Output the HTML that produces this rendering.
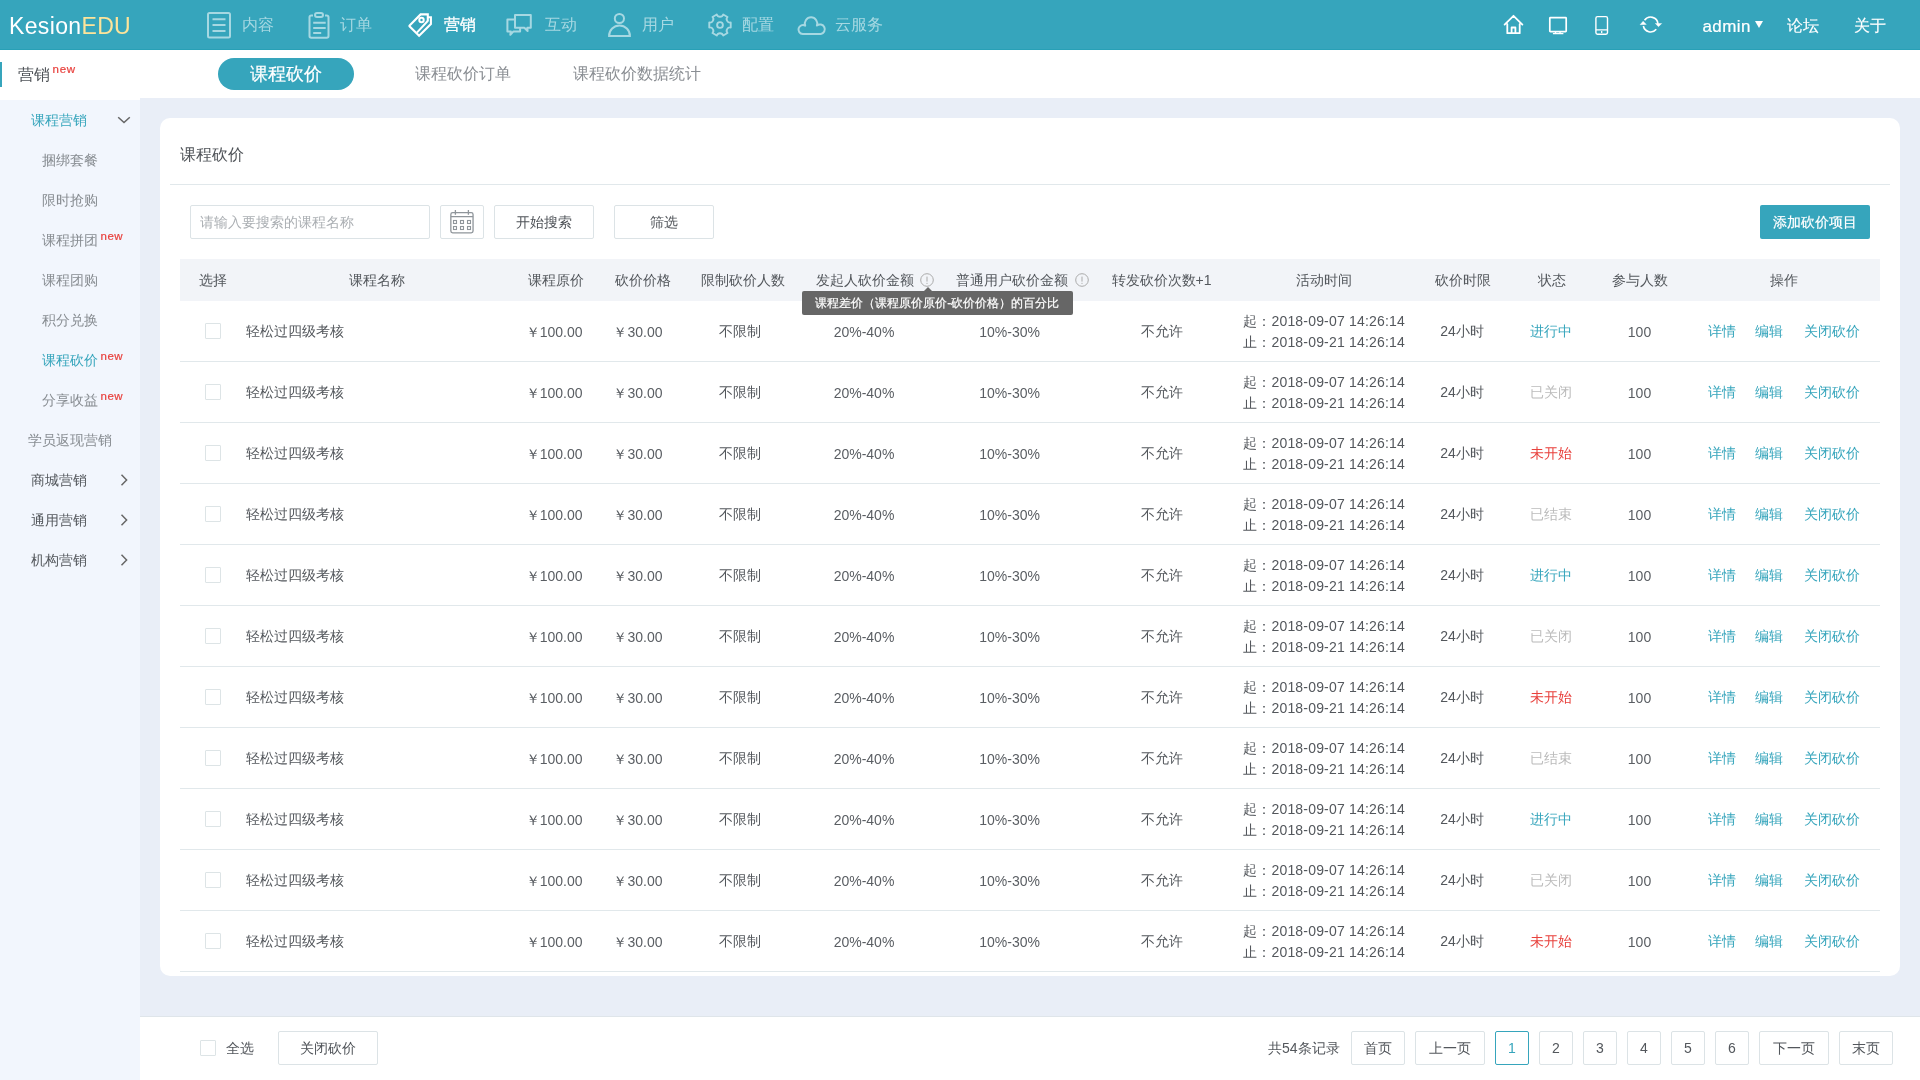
<!DOCTYPE html>
<html><head><meta charset="utf-8"><title>课程砍价</title>
<style>
html,body{margin:0;padding:0;width:1920px;height:1080px;overflow:hidden;background:#fff;font-family:"Liberation Sans", sans-serif}
.t{position:absolute;white-space:nowrap}
#root{position:absolute;left:0;top:0;width:1920px;height:1080px;will-change:transform}
.b{position:absolute}
svg.b{overflow:visible}
</style></head><body><div id="root">
<div class="b" style="left:0px;top:0px;width:1920px;height:49px;background:#36a5bc"></div>
<div class="b" style="left:0px;top:49px;width:1920px;height:1px;background:#28a0b6"></div>
<div class="t" style="left:9px;top:11px;font-size:23px;line-height:30px;letter-spacing:0.35px;color:#fff">Kesion<span style="color:#fde49a">EDU</span></div>
<svg class="b" style="left:206px;top:11px;" width="28" height="30" viewBox="0 0 28 30"><rect x="2" y="2" width="22" height="24.5" rx="1.5" fill="none" stroke="#a6d8e2" stroke-width="2"/><path d="M6.5 8.3h13M6.5 14h13M6.5 19.9h13" stroke="#a6d8e2" stroke-width="2"/></svg>
<div class="t" style="left:242px;top:14.0px;font-size:16px;line-height:22px;color:#a6d8e2;">内容</div>
<svg class="b" style="left:307px;top:11px;" width="26" height="30" viewBox="0 0 26 30"><path d="M6 4.5H4.2a1.7 1.7 0 0 0-1.7 1.7v18.9a1.7 1.7 0 0 0 1.7 1.7h15.6a1.7 1.7 0 0 0 1.7-1.7V6.2a1.7 1.7 0 0 0-1.7-1.7H18" fill="none" stroke="#a6d8e2" stroke-width="2"/><rect x="8" y="2" width="8" height="4" rx="2" fill="none" stroke="#a6d8e2" stroke-width="2"/><path d="M6.2 11.7h12.5M6.2 16.9h12.5M6.2 22.1h8" stroke="#a6d8e2" stroke-width="2"/></svg>
<div class="t" style="left:340px;top:14.0px;font-size:16px;line-height:22px;color:#a6d8e2;">订单</div>
<svg class="b" style="left:404px;top:9px;" width="32" height="32" viewBox="0 0 32 32"><path d="M23.7 12L12.9 23.6" stroke="#fff" stroke-width="2"/><path d="M24.3 8.2H26.9V15.1L15.1 26.7L5.5 17.3Q5.2 16.9 5.6 16.5L16.6 5.4H23.8V12.4" fill="none" stroke="#fff" stroke-width="2.1" stroke-linejoin="miter"/><circle cx="17.5" cy="11" r="2.2" fill="none" stroke="#fff" stroke-width="2"/></svg>
<div class="t" style="left:444px;top:14.0px;font-size:16px;line-height:22px;color:#fff;-webkit-text-stroke:0.3px #fff">营销</div>
<svg class="b" style="left:502px;top:9px;" width="34" height="32" viewBox="0 0 34 32"><path d="M5.4 10.4H18.1V22.4H11.5L8.3 25.8L8.8 22.4H5.4Z" fill="none" stroke="#a6d8e2" stroke-width="2" stroke-linejoin="round"/><path d="M13 6H28.8V18.7H25.3L25.6 22L22.3 18.7H13Z" fill="#36a5bc" stroke="#a6d8e2" stroke-width="2" stroke-linejoin="round"/></svg>
<div class="t" style="left:545px;top:14.0px;font-size:16px;line-height:22px;color:#a6d8e2;">互动</div>
<svg class="b" style="left:604px;top:9px;" width="32" height="32" viewBox="0 0 32 32"><circle cx="15.4" cy="9.5" r="4.6" fill="none" stroke="#a6d8e2" stroke-width="2"/><path d="M5.1 26.9A10.4 10.4 0 0 1 25.9 26.9Z" fill="none" stroke="#a6d8e2" stroke-width="2"/></svg>
<div class="t" style="left:642px;top:14.0px;font-size:16px;line-height:22px;color:#a6d8e2;">用户</div>
<svg class="b" style="left:704px;top:9px;" width="32" height="32" viewBox="0 0 32 32"><path d="M26.72 18.47L26.72 13.53A3.4 3.4 0 0 1 23.50 7.96L23.50 7.96L19.22 5.48A3.4 3.4 0 0 1 12.78 5.48L12.78 5.48L8.50 7.96A3.4 3.4 0 0 1 5.28 13.53L5.28 13.53L5.28 18.47A3.4 3.4 0 0 1 8.50 24.04L8.50 24.04L12.78 26.52A3.4 3.4 0 0 1 19.22 26.52L19.22 26.52L23.50 24.04A3.4 3.4 0 0 1 26.72 18.47Z" fill="none" stroke="#a6d8e2" stroke-width="1.9" stroke-linejoin="round"/><circle cx="16" cy="16" r="2.9" fill="none" stroke="#a6d8e2" stroke-width="1.9"/></svg>
<div class="t" style="left:742px;top:14.0px;font-size:16px;line-height:22px;color:#a6d8e2;">配置</div>
<svg class="b" style="left:795px;top:9px;" width="34" height="32" viewBox="0 0 34 32"><path d="M7.7 25A4.5 4.5 0 1 1 10.2 16.6A6.2 6.2 0 1 1 21.9 16.6A4.8 4.8 0 1 1 25.8 25Z" fill="none" stroke="#a6d8e2" stroke-width="2" stroke-linejoin="round"/></svg>
<div class="t" style="left:835px;top:14.0px;font-size:16px;line-height:22px;color:#a6d8e2;">云服务</div>
<svg class="b" style="left:1500px;top:10px;" width="28" height="30" viewBox="0 0 28 30"><path d="M4.6 14.6L13.5 5.8L22.4 14.6M7.3 14.2V23.2H19.7V14.2M11.6 23.2V17.5H15.4V23.2" fill="none" stroke="#fff" stroke-width="1.8" stroke-linejoin="round" stroke-linecap="round"/></svg>
<svg class="b" style="left:1544px;top:10px;" width="28" height="30" viewBox="0 0 28 30"><rect x="5.8" y="7.6" width="16.4" height="14" rx="0.6" fill="none" stroke="#fff" stroke-width="1.7"/><path d="M11.5 21.2v2.2M16 21.2v2.2M8.9 23.6h10.5" stroke="#fff" stroke-width="1.4"/></svg>
<svg class="b" style="left:1588px;top:10px;" width="26" height="30" viewBox="0 0 26 30"><rect x="7.9" y="6.6" width="11.6" height="17.6" rx="1.6" fill="none" stroke="#fff" stroke-width="1.4"/><path d="M7.9 19.9h11.6M13.7 21v2" stroke="#fff" stroke-width="1.3"/></svg>
<svg class="b" style="left:1636px;top:10px;" width="30" height="30" viewBox="0 0 30 30"><path d="M8.54 10.26A7.4 7.4 0 0 1 21.97 13.86M20.27 19.26A7.4 7.4 0 0 1 7.36 16.04" fill="none" stroke="#fff" stroke-width="1.6"/><path d="M19.3 13.5H25.7L22.5 16.7ZM4.1 14.7L10.3 14.4L7.1 11.2Z" fill="#fff" stroke="#fff" stroke-width="0.4" stroke-linejoin="round"/></svg>
<div class="t" style="left:1702.5px;top:15.5px;font-size:17px;line-height:22px;color:#fff;letter-spacing:0.4px;-webkit-text-stroke:0.2px #fff">admin</div>
<div class="b" style="left:1755px;top:21px;width:0;height:0;border-left:4.5px solid transparent;border-right:4.5px solid transparent;border-top:7px solid #fff"></div>
<div class="t" style="left:1786.5px;top:15.0px;font-size:16px;line-height:22px;color:#fff;-webkit-text-stroke:0.15px #fff">论坛</div>
<div class="t" style="left:1853.5px;top:15.0px;font-size:16px;line-height:22px;color:#fff;-webkit-text-stroke:0.15px #fff">关于</div>
<div class="b" style="left:0px;top:50px;width:1920px;height:48px;background:#fff"></div>
<div class="b" style="left:0px;top:62px;width:2px;height:25px;background:#36a5bc"></div>
<div class="t" style="left:17.5px;top:63.5px;font-size:16px;line-height:22px;color:#4f5358;">营销</div>
<div class="t" style="left:52.5px;top:62.2px;font-size:11.5px;line-height:14px;color:#e8413d;letter-spacing:0.75px;-webkit-text-stroke:0.2px #e8413d">new</div>
<div class="b" style="left:218px;top:58px;width:136px;height:32px;background:#36a5bc;border-radius:16px"></div>
<div class="t" style="left:218.0px;width:136px;text-align:center;top:61.5px;font-size:18px;line-height:24px;color:#fff;-webkit-text-stroke:0.2px #fff">课程砍价</div>
<div class="t" style="left:414.5px;top:62.5px;font-size:16px;line-height:22px;color:#8a8e93;">课程砍价订单</div>
<div class="t" style="left:572.5px;top:62.5px;font-size:16px;line-height:22px;color:#8a8e93;">课程砍价数据统计</div>
<div class="b" style="left:0px;top:100px;width:140px;height:980px;background:#f2f6fd"></div>
<div class="b" style="left:140px;top:98px;width:1780px;height:918px;background:#e9eef7"></div>
<div class="b" style="left:0px;top:98px;width:140px;height:2px;background:#fff"></div>
<div class="t" style="left:31px;top:110.0px;font-size:14px;line-height:20px;color:#36a5bc;">课程营销</div>
<svg class="b" style="left:116px;top:114px;" width="16" height="14" viewBox="0 0 16 14"><path d="M2.2 3.2L8 8.6L13.8 3.2" fill="none" stroke="#666" stroke-width="1.5"/></svg>
<div class="t" style="left:42px;top:149.5px;font-size:14px;line-height:20px;color:#878c91;">捆绑套餐</div>
<div class="t" style="left:42px;top:189.5px;font-size:14px;line-height:20px;color:#878c91;">限时抢购</div>
<div class="t" style="left:42px;top:229.5px;font-size:14px;line-height:20px;color:#878c91;">课程拼团</div>
<div class="t" style="left:100.5px;top:228.7px;font-size:11.5px;line-height:14px;color:#e8413d;letter-spacing:0.5px;-webkit-text-stroke:0.2px #e8413d">new</div>
<div class="t" style="left:42px;top:269.5px;font-size:14px;line-height:20px;color:#878c91;">课程团购</div>
<div class="t" style="left:42px;top:309.5px;font-size:14px;line-height:20px;color:#878c91;">积分兑换</div>
<div class="t" style="left:42px;top:349.5px;font-size:14px;line-height:20px;color:#36a5bc;">课程砍价</div>
<div class="t" style="left:100.5px;top:348.7px;font-size:11.5px;line-height:14px;color:#e8413d;letter-spacing:0.5px;-webkit-text-stroke:0.2px #e8413d">new</div>
<div class="t" style="left:42px;top:389.5px;font-size:14px;line-height:20px;color:#878c91;">分享收益</div>
<div class="t" style="left:100.5px;top:388.7px;font-size:11.5px;line-height:14px;color:#e8413d;letter-spacing:0.5px;-webkit-text-stroke:0.2px #e8413d">new</div>
<div class="t" style="left:28px;top:430.0px;font-size:14px;line-height:20px;color:#878c91;">学员返现营销</div>
<div class="t" style="left:31px;top:470.0px;font-size:14px;line-height:20px;color:#53575c;">商城营销</div>
<svg class="b" style="left:116px;top:472px;" width="14" height="16" viewBox="0 0 14 16"><path d="M5.5 2.8L10.6 8L5.5 13.2" fill="none" stroke="#666" stroke-width="1.5"/></svg>
<div class="t" style="left:31px;top:510.0px;font-size:14px;line-height:20px;color:#53575c;">通用营销</div>
<svg class="b" style="left:116px;top:512px;" width="14" height="16" viewBox="0 0 14 16"><path d="M5.5 2.8L10.6 8L5.5 13.2" fill="none" stroke="#666" stroke-width="1.5"/></svg>
<div class="t" style="left:31px;top:550.0px;font-size:14px;line-height:20px;color:#53575c;">机构营销</div>
<svg class="b" style="left:116px;top:552px;" width="14" height="16" viewBox="0 0 14 16"><path d="M5.5 2.8L10.6 8L5.5 13.2" fill="none" stroke="#666" stroke-width="1.5"/></svg>
<div class="b" style="left:160px;top:118px;width:1740px;height:858px;background:#fff;border-radius:10px"></div>
<div class="t" style="left:179.5px;top:143.5px;font-size:16px;line-height:22px;color:#4f5358;">课程砍价</div>
<div class="b" style="left:170px;top:184px;width:1720px;height:1px;background:#e1e8eb"></div>
<div class="b" style="left:190px;top:205px;width:240px;height:34px;border:1px solid #dce3e6;border-radius:2px;box-sizing:border-box;background:#fff"></div>
<div class="t" style="left:200px;top:212.0px;font-size:14px;line-height:20px;color:#abafb3;">请输入要搜索的课程名称</div>
<div class="b" style="left:440px;top:205px;width:44px;height:34px;border:1px solid #dce3e6;border-radius:2px;box-sizing:border-box;background:#fff"></div>
<svg class="b" style="left:446px;top:206px;" width="32" height="32" viewBox="0 0 32 32"><rect x="4.85" y="6.65" width="22.2" height="20.2" rx="1.8" fill="none" stroke="#8f959a" stroke-width="1.3"/><path d="M4.85 10.6H27.05M9.4 4v4.8M22.4 4v4.8" stroke="#8f959a" stroke-width="1.3"/><rect x="7.5" y="14.5" width="3" height="3" fill="none" stroke="#8f959a" stroke-width="1.1"/><rect x="7.5" y="20.5" width="3" height="3" fill="none" stroke="#8f959a" stroke-width="1.1"/><rect x="14.5" y="14.5" width="3" height="3" fill="none" stroke="#8f959a" stroke-width="1.1"/><rect x="14.5" y="20.5" width="3" height="3" fill="none" stroke="#8f959a" stroke-width="1.1"/><rect x="21.5" y="14.5" width="3" height="3" fill="none" stroke="#8f959a" stroke-width="1.1"/><rect x="21.5" y="20.5" width="3" height="3" fill="none" stroke="#8f959a" stroke-width="1.1"/></svg>
<div class="b" style="left:494px;top:205px;width:100px;height:34px;border:1px solid #dce3e6;border-radius:2px;box-sizing:border-box;background:#fff"></div>
<div class="t" style="left:494.0px;width:100px;text-align:center;top:212.0px;font-size:14px;line-height:20px;color:#4f5358;">开始搜索</div>
<div class="b" style="left:614px;top:205px;width:100px;height:34px;border:1px solid #dce3e6;border-radius:2px;box-sizing:border-box;background:#fff"></div>
<div class="t" style="left:614.0px;width:100px;text-align:center;top:212.0px;font-size:14px;line-height:20px;color:#4f5358;">筛选</div>
<div class="b" style="left:1760px;top:205px;width:110px;height:34px;background:#36a5bc;border-radius:2px"></div>
<div class="t" style="left:1760.0px;width:110px;text-align:center;top:212.0px;font-size:14px;line-height:20px;color:#fff;-webkit-text-stroke:0.2px #fff">添加砍价项目</div>
<div class="b" style="left:180px;top:259px;width:1700px;height:42px;background:#f2f4f8"></div>
<div class="t" style="left:62.5px;width:300px;text-align:center;top:270.0px;font-size:14px;line-height:20px;color:#53575c;">选择</div>
<div class="t" style="left:227.0px;width:300px;text-align:center;top:270.0px;font-size:14px;line-height:20px;color:#53575c;">课程名称</div>
<div class="t" style="left:405.5px;width:300px;text-align:center;top:270.0px;font-size:14px;line-height:20px;color:#53575c;">课程原价</div>
<div class="t" style="left:492.5px;width:300px;text-align:center;top:270.0px;font-size:14px;line-height:20px;color:#53575c;">砍价价格</div>
<div class="t" style="left:592.5px;width:300px;text-align:center;top:270.0px;font-size:14px;line-height:20px;color:#53575c;">限制砍价人数</div>
<div class="t" style="left:816px;top:270.0px;font-size:14px;line-height:20px;color:#53575c;">发起人砍价金额</div>
<div class="t" style="left:956px;top:270.0px;font-size:14px;line-height:20px;color:#53575c;">普通用户砍价金额</div>
<svg class="b" style="left:920.25px;top:273px;" width="14" height="14" viewBox="0 0 14 14"><circle cx="7" cy="7" r="6.3" fill="none" stroke="#aaa" stroke-width="1"/><path d="M7 3.6V8.6" stroke="#aaa" stroke-width="1"/><circle cx="7" cy="10.3" r="0.6" fill="#aaa"/></svg>
<svg class="b" style="left:1075px;top:273px;" width="14" height="14" viewBox="0 0 14 14"><circle cx="7" cy="7" r="6.3" fill="none" stroke="#aaa" stroke-width="1"/><path d="M7 3.6V8.6" stroke="#aaa" stroke-width="1"/><circle cx="7" cy="10.3" r="0.6" fill="#aaa"/></svg>
<div class="t" style="left:1011.5px;width:300px;text-align:center;top:270.0px;font-size:14px;line-height:20px;color:#53575c;">转发砍价次数+1</div>
<div class="t" style="left:1174.4px;width:300px;text-align:center;top:270.0px;font-size:14px;line-height:20px;color:#53575c;">活动时间</div>
<div class="t" style="left:1312.5px;width:300px;text-align:center;top:270.0px;font-size:14px;line-height:20px;color:#53575c;">砍价时限</div>
<div class="t" style="left:1401.8px;width:300px;text-align:center;top:270.0px;font-size:14px;line-height:20px;color:#53575c;">状态</div>
<div class="t" style="left:1489.5px;width:300px;text-align:center;top:270.0px;font-size:14px;line-height:20px;color:#53575c;">参与人数</div>
<div class="t" style="left:1633.5px;width:300px;text-align:center;top:270.0px;font-size:14px;line-height:20px;color:#53575c;">操作</div>
<div class="b" style="left:180px;top:361px;width:1700px;height:1px;background:#e1e8eb"></div>
<div class="b" style="left:205px;top:323px;width:16px;height:16px;border:1px solid #dde4e6;border-radius:1px;box-sizing:border-box;background:#fff"></div>
<div class="t" style="left:246px;top:321.0px;font-size:14px;line-height:20px;color:#53575c;">轻松过四级考核</div>
<div class="t" style="left:404.1px;width:300px;text-align:center;top:321.5px;font-size:14px;line-height:20px;color:#5a5e63;">￥100.00</div>
<div class="t" style="left:488.0px;width:300px;text-align:center;top:321.5px;font-size:14px;line-height:20px;color:#5a5e63;">￥30.00</div>
<div class="t" style="left:590.4px;width:300px;text-align:center;top:321.0px;font-size:14px;line-height:20px;color:#53575c;">不限制</div>
<div class="t" style="left:714.0px;width:300px;text-align:center;top:321.5px;font-size:14px;line-height:20px;color:#5a5e63;">20%-40%</div>
<div class="t" style="left:859.6px;width:300px;text-align:center;top:321.5px;font-size:14px;line-height:20px;color:#5a5e63;">10%-30%</div>
<div class="t" style="left:1011.75px;width:300px;text-align:center;top:321.0px;font-size:14px;line-height:20px;color:#53575c;">不允许</div>
<div class="t" style="left:1174.0px;width:300px;text-align:center;top:310.5px;font-size:14px;line-height:20px;color:#53575c;letter-spacing:0.18px">起：2018-09-07 14:26:14</div>
<div class="t" style="left:1174.0px;width:300px;text-align:center;top:331.5px;font-size:14px;line-height:20px;color:#53575c;letter-spacing:0.18px">止：2018-09-21 14:26:14</div>
<div class="t" style="left:1312.0px;width:300px;text-align:center;top:321.0px;font-size:14px;line-height:20px;color:#53575c;">24小时</div>
<div class="t" style="left:1400.8px;width:300px;text-align:center;top:321.0px;font-size:14px;line-height:20px;color:#36a5bc;">进行中</div>
<div class="t" style="left:1489.5px;width:300px;text-align:center;top:321.5px;font-size:14px;line-height:20px;color:#5a5e63;">100</div>
<div class="t" style="left:1707.6px;top:321.0px;font-size:14px;line-height:20px;color:#36a5bc;">详情</div>
<div class="t" style="left:1755.4px;top:321.0px;font-size:14px;line-height:20px;color:#36a5bc;">编辑</div>
<div class="t" style="left:1803.6px;top:321.0px;font-size:14px;line-height:20px;color:#36a5bc;">关闭砍价</div>
<div class="b" style="left:180px;top:422px;width:1700px;height:1px;background:#e1e8eb"></div>
<div class="b" style="left:205px;top:384px;width:16px;height:16px;border:1px solid #dde4e6;border-radius:1px;box-sizing:border-box;background:#fff"></div>
<div class="t" style="left:246px;top:382.0px;font-size:14px;line-height:20px;color:#53575c;">轻松过四级考核</div>
<div class="t" style="left:404.1px;width:300px;text-align:center;top:382.5px;font-size:14px;line-height:20px;color:#5a5e63;">￥100.00</div>
<div class="t" style="left:488.0px;width:300px;text-align:center;top:382.5px;font-size:14px;line-height:20px;color:#5a5e63;">￥30.00</div>
<div class="t" style="left:590.4px;width:300px;text-align:center;top:382.0px;font-size:14px;line-height:20px;color:#53575c;">不限制</div>
<div class="t" style="left:714.0px;width:300px;text-align:center;top:382.5px;font-size:14px;line-height:20px;color:#5a5e63;">20%-40%</div>
<div class="t" style="left:859.6px;width:300px;text-align:center;top:382.5px;font-size:14px;line-height:20px;color:#5a5e63;">10%-30%</div>
<div class="t" style="left:1011.75px;width:300px;text-align:center;top:382.0px;font-size:14px;line-height:20px;color:#53575c;">不允许</div>
<div class="t" style="left:1174.0px;width:300px;text-align:center;top:371.5px;font-size:14px;line-height:20px;color:#53575c;letter-spacing:0.18px">起：2018-09-07 14:26:14</div>
<div class="t" style="left:1174.0px;width:300px;text-align:center;top:392.5px;font-size:14px;line-height:20px;color:#53575c;letter-spacing:0.18px">止：2018-09-21 14:26:14</div>
<div class="t" style="left:1312.0px;width:300px;text-align:center;top:382.0px;font-size:14px;line-height:20px;color:#53575c;">24小时</div>
<div class="t" style="left:1400.8px;width:300px;text-align:center;top:382.0px;font-size:14px;line-height:20px;color:#bbb;">已关闭</div>
<div class="t" style="left:1489.5px;width:300px;text-align:center;top:382.5px;font-size:14px;line-height:20px;color:#5a5e63;">100</div>
<div class="t" style="left:1707.6px;top:382.0px;font-size:14px;line-height:20px;color:#36a5bc;">详情</div>
<div class="t" style="left:1755.4px;top:382.0px;font-size:14px;line-height:20px;color:#36a5bc;">编辑</div>
<div class="t" style="left:1803.6px;top:382.0px;font-size:14px;line-height:20px;color:#36a5bc;">关闭砍价</div>
<div class="b" style="left:180px;top:483px;width:1700px;height:1px;background:#e1e8eb"></div>
<div class="b" style="left:205px;top:445px;width:16px;height:16px;border:1px solid #dde4e6;border-radius:1px;box-sizing:border-box;background:#fff"></div>
<div class="t" style="left:246px;top:443.0px;font-size:14px;line-height:20px;color:#53575c;">轻松过四级考核</div>
<div class="t" style="left:404.1px;width:300px;text-align:center;top:443.5px;font-size:14px;line-height:20px;color:#5a5e63;">￥100.00</div>
<div class="t" style="left:488.0px;width:300px;text-align:center;top:443.5px;font-size:14px;line-height:20px;color:#5a5e63;">￥30.00</div>
<div class="t" style="left:590.4px;width:300px;text-align:center;top:443.0px;font-size:14px;line-height:20px;color:#53575c;">不限制</div>
<div class="t" style="left:714.0px;width:300px;text-align:center;top:443.5px;font-size:14px;line-height:20px;color:#5a5e63;">20%-40%</div>
<div class="t" style="left:859.6px;width:300px;text-align:center;top:443.5px;font-size:14px;line-height:20px;color:#5a5e63;">10%-30%</div>
<div class="t" style="left:1011.75px;width:300px;text-align:center;top:443.0px;font-size:14px;line-height:20px;color:#53575c;">不允许</div>
<div class="t" style="left:1174.0px;width:300px;text-align:center;top:432.5px;font-size:14px;line-height:20px;color:#53575c;letter-spacing:0.18px">起：2018-09-07 14:26:14</div>
<div class="t" style="left:1174.0px;width:300px;text-align:center;top:453.5px;font-size:14px;line-height:20px;color:#53575c;letter-spacing:0.18px">止：2018-09-21 14:26:14</div>
<div class="t" style="left:1312.0px;width:300px;text-align:center;top:443.0px;font-size:14px;line-height:20px;color:#53575c;">24小时</div>
<div class="t" style="left:1400.8px;width:300px;text-align:center;top:443.0px;font-size:14px;line-height:20px;color:#e8413d;">未开始</div>
<div class="t" style="left:1489.5px;width:300px;text-align:center;top:443.5px;font-size:14px;line-height:20px;color:#5a5e63;">100</div>
<div class="t" style="left:1707.6px;top:443.0px;font-size:14px;line-height:20px;color:#36a5bc;">详情</div>
<div class="t" style="left:1755.4px;top:443.0px;font-size:14px;line-height:20px;color:#36a5bc;">编辑</div>
<div class="t" style="left:1803.6px;top:443.0px;font-size:14px;line-height:20px;color:#36a5bc;">关闭砍价</div>
<div class="b" style="left:180px;top:544px;width:1700px;height:1px;background:#e1e8eb"></div>
<div class="b" style="left:205px;top:506px;width:16px;height:16px;border:1px solid #dde4e6;border-radius:1px;box-sizing:border-box;background:#fff"></div>
<div class="t" style="left:246px;top:504.0px;font-size:14px;line-height:20px;color:#53575c;">轻松过四级考核</div>
<div class="t" style="left:404.1px;width:300px;text-align:center;top:504.5px;font-size:14px;line-height:20px;color:#5a5e63;">￥100.00</div>
<div class="t" style="left:488.0px;width:300px;text-align:center;top:504.5px;font-size:14px;line-height:20px;color:#5a5e63;">￥30.00</div>
<div class="t" style="left:590.4px;width:300px;text-align:center;top:504.0px;font-size:14px;line-height:20px;color:#53575c;">不限制</div>
<div class="t" style="left:714.0px;width:300px;text-align:center;top:504.5px;font-size:14px;line-height:20px;color:#5a5e63;">20%-40%</div>
<div class="t" style="left:859.6px;width:300px;text-align:center;top:504.5px;font-size:14px;line-height:20px;color:#5a5e63;">10%-30%</div>
<div class="t" style="left:1011.75px;width:300px;text-align:center;top:504.0px;font-size:14px;line-height:20px;color:#53575c;">不允许</div>
<div class="t" style="left:1174.0px;width:300px;text-align:center;top:493.5px;font-size:14px;line-height:20px;color:#53575c;letter-spacing:0.18px">起：2018-09-07 14:26:14</div>
<div class="t" style="left:1174.0px;width:300px;text-align:center;top:514.5px;font-size:14px;line-height:20px;color:#53575c;letter-spacing:0.18px">止：2018-09-21 14:26:14</div>
<div class="t" style="left:1312.0px;width:300px;text-align:center;top:504.0px;font-size:14px;line-height:20px;color:#53575c;">24小时</div>
<div class="t" style="left:1400.8px;width:300px;text-align:center;top:504.0px;font-size:14px;line-height:20px;color:#bbb;">已结束</div>
<div class="t" style="left:1489.5px;width:300px;text-align:center;top:504.5px;font-size:14px;line-height:20px;color:#5a5e63;">100</div>
<div class="t" style="left:1707.6px;top:504.0px;font-size:14px;line-height:20px;color:#36a5bc;">详情</div>
<div class="t" style="left:1755.4px;top:504.0px;font-size:14px;line-height:20px;color:#36a5bc;">编辑</div>
<div class="t" style="left:1803.6px;top:504.0px;font-size:14px;line-height:20px;color:#36a5bc;">关闭砍价</div>
<div class="b" style="left:180px;top:605px;width:1700px;height:1px;background:#e1e8eb"></div>
<div class="b" style="left:205px;top:567px;width:16px;height:16px;border:1px solid #dde4e6;border-radius:1px;box-sizing:border-box;background:#fff"></div>
<div class="t" style="left:246px;top:565.0px;font-size:14px;line-height:20px;color:#53575c;">轻松过四级考核</div>
<div class="t" style="left:404.1px;width:300px;text-align:center;top:565.5px;font-size:14px;line-height:20px;color:#5a5e63;">￥100.00</div>
<div class="t" style="left:488.0px;width:300px;text-align:center;top:565.5px;font-size:14px;line-height:20px;color:#5a5e63;">￥30.00</div>
<div class="t" style="left:590.4px;width:300px;text-align:center;top:565.0px;font-size:14px;line-height:20px;color:#53575c;">不限制</div>
<div class="t" style="left:714.0px;width:300px;text-align:center;top:565.5px;font-size:14px;line-height:20px;color:#5a5e63;">20%-40%</div>
<div class="t" style="left:859.6px;width:300px;text-align:center;top:565.5px;font-size:14px;line-height:20px;color:#5a5e63;">10%-30%</div>
<div class="t" style="left:1011.75px;width:300px;text-align:center;top:565.0px;font-size:14px;line-height:20px;color:#53575c;">不允许</div>
<div class="t" style="left:1174.0px;width:300px;text-align:center;top:554.5px;font-size:14px;line-height:20px;color:#53575c;letter-spacing:0.18px">起：2018-09-07 14:26:14</div>
<div class="t" style="left:1174.0px;width:300px;text-align:center;top:575.5px;font-size:14px;line-height:20px;color:#53575c;letter-spacing:0.18px">止：2018-09-21 14:26:14</div>
<div class="t" style="left:1312.0px;width:300px;text-align:center;top:565.0px;font-size:14px;line-height:20px;color:#53575c;">24小时</div>
<div class="t" style="left:1400.8px;width:300px;text-align:center;top:565.0px;font-size:14px;line-height:20px;color:#36a5bc;">进行中</div>
<div class="t" style="left:1489.5px;width:300px;text-align:center;top:565.5px;font-size:14px;line-height:20px;color:#5a5e63;">100</div>
<div class="t" style="left:1707.6px;top:565.0px;font-size:14px;line-height:20px;color:#36a5bc;">详情</div>
<div class="t" style="left:1755.4px;top:565.0px;font-size:14px;line-height:20px;color:#36a5bc;">编辑</div>
<div class="t" style="left:1803.6px;top:565.0px;font-size:14px;line-height:20px;color:#36a5bc;">关闭砍价</div>
<div class="b" style="left:180px;top:666px;width:1700px;height:1px;background:#e1e8eb"></div>
<div class="b" style="left:205px;top:628px;width:16px;height:16px;border:1px solid #dde4e6;border-radius:1px;box-sizing:border-box;background:#fff"></div>
<div class="t" style="left:246px;top:626.0px;font-size:14px;line-height:20px;color:#53575c;">轻松过四级考核</div>
<div class="t" style="left:404.1px;width:300px;text-align:center;top:626.5px;font-size:14px;line-height:20px;color:#5a5e63;">￥100.00</div>
<div class="t" style="left:488.0px;width:300px;text-align:center;top:626.5px;font-size:14px;line-height:20px;color:#5a5e63;">￥30.00</div>
<div class="t" style="left:590.4px;width:300px;text-align:center;top:626.0px;font-size:14px;line-height:20px;color:#53575c;">不限制</div>
<div class="t" style="left:714.0px;width:300px;text-align:center;top:626.5px;font-size:14px;line-height:20px;color:#5a5e63;">20%-40%</div>
<div class="t" style="left:859.6px;width:300px;text-align:center;top:626.5px;font-size:14px;line-height:20px;color:#5a5e63;">10%-30%</div>
<div class="t" style="left:1011.75px;width:300px;text-align:center;top:626.0px;font-size:14px;line-height:20px;color:#53575c;">不允许</div>
<div class="t" style="left:1174.0px;width:300px;text-align:center;top:615.5px;font-size:14px;line-height:20px;color:#53575c;letter-spacing:0.18px">起：2018-09-07 14:26:14</div>
<div class="t" style="left:1174.0px;width:300px;text-align:center;top:636.5px;font-size:14px;line-height:20px;color:#53575c;letter-spacing:0.18px">止：2018-09-21 14:26:14</div>
<div class="t" style="left:1312.0px;width:300px;text-align:center;top:626.0px;font-size:14px;line-height:20px;color:#53575c;">24小时</div>
<div class="t" style="left:1400.8px;width:300px;text-align:center;top:626.0px;font-size:14px;line-height:20px;color:#bbb;">已关闭</div>
<div class="t" style="left:1489.5px;width:300px;text-align:center;top:626.5px;font-size:14px;line-height:20px;color:#5a5e63;">100</div>
<div class="t" style="left:1707.6px;top:626.0px;font-size:14px;line-height:20px;color:#36a5bc;">详情</div>
<div class="t" style="left:1755.4px;top:626.0px;font-size:14px;line-height:20px;color:#36a5bc;">编辑</div>
<div class="t" style="left:1803.6px;top:626.0px;font-size:14px;line-height:20px;color:#36a5bc;">关闭砍价</div>
<div class="b" style="left:180px;top:727px;width:1700px;height:1px;background:#e1e8eb"></div>
<div class="b" style="left:205px;top:689px;width:16px;height:16px;border:1px solid #dde4e6;border-radius:1px;box-sizing:border-box;background:#fff"></div>
<div class="t" style="left:246px;top:687.0px;font-size:14px;line-height:20px;color:#53575c;">轻松过四级考核</div>
<div class="t" style="left:404.1px;width:300px;text-align:center;top:687.5px;font-size:14px;line-height:20px;color:#5a5e63;">￥100.00</div>
<div class="t" style="left:488.0px;width:300px;text-align:center;top:687.5px;font-size:14px;line-height:20px;color:#5a5e63;">￥30.00</div>
<div class="t" style="left:590.4px;width:300px;text-align:center;top:687.0px;font-size:14px;line-height:20px;color:#53575c;">不限制</div>
<div class="t" style="left:714.0px;width:300px;text-align:center;top:687.5px;font-size:14px;line-height:20px;color:#5a5e63;">20%-40%</div>
<div class="t" style="left:859.6px;width:300px;text-align:center;top:687.5px;font-size:14px;line-height:20px;color:#5a5e63;">10%-30%</div>
<div class="t" style="left:1011.75px;width:300px;text-align:center;top:687.0px;font-size:14px;line-height:20px;color:#53575c;">不允许</div>
<div class="t" style="left:1174.0px;width:300px;text-align:center;top:676.5px;font-size:14px;line-height:20px;color:#53575c;letter-spacing:0.18px">起：2018-09-07 14:26:14</div>
<div class="t" style="left:1174.0px;width:300px;text-align:center;top:697.5px;font-size:14px;line-height:20px;color:#53575c;letter-spacing:0.18px">止：2018-09-21 14:26:14</div>
<div class="t" style="left:1312.0px;width:300px;text-align:center;top:687.0px;font-size:14px;line-height:20px;color:#53575c;">24小时</div>
<div class="t" style="left:1400.8px;width:300px;text-align:center;top:687.0px;font-size:14px;line-height:20px;color:#e8413d;">未开始</div>
<div class="t" style="left:1489.5px;width:300px;text-align:center;top:687.5px;font-size:14px;line-height:20px;color:#5a5e63;">100</div>
<div class="t" style="left:1707.6px;top:687.0px;font-size:14px;line-height:20px;color:#36a5bc;">详情</div>
<div class="t" style="left:1755.4px;top:687.0px;font-size:14px;line-height:20px;color:#36a5bc;">编辑</div>
<div class="t" style="left:1803.6px;top:687.0px;font-size:14px;line-height:20px;color:#36a5bc;">关闭砍价</div>
<div class="b" style="left:180px;top:788px;width:1700px;height:1px;background:#e1e8eb"></div>
<div class="b" style="left:205px;top:750px;width:16px;height:16px;border:1px solid #dde4e6;border-radius:1px;box-sizing:border-box;background:#fff"></div>
<div class="t" style="left:246px;top:748.0px;font-size:14px;line-height:20px;color:#53575c;">轻松过四级考核</div>
<div class="t" style="left:404.1px;width:300px;text-align:center;top:748.5px;font-size:14px;line-height:20px;color:#5a5e63;">￥100.00</div>
<div class="t" style="left:488.0px;width:300px;text-align:center;top:748.5px;font-size:14px;line-height:20px;color:#5a5e63;">￥30.00</div>
<div class="t" style="left:590.4px;width:300px;text-align:center;top:748.0px;font-size:14px;line-height:20px;color:#53575c;">不限制</div>
<div class="t" style="left:714.0px;width:300px;text-align:center;top:748.5px;font-size:14px;line-height:20px;color:#5a5e63;">20%-40%</div>
<div class="t" style="left:859.6px;width:300px;text-align:center;top:748.5px;font-size:14px;line-height:20px;color:#5a5e63;">10%-30%</div>
<div class="t" style="left:1011.75px;width:300px;text-align:center;top:748.0px;font-size:14px;line-height:20px;color:#53575c;">不允许</div>
<div class="t" style="left:1174.0px;width:300px;text-align:center;top:737.5px;font-size:14px;line-height:20px;color:#53575c;letter-spacing:0.18px">起：2018-09-07 14:26:14</div>
<div class="t" style="left:1174.0px;width:300px;text-align:center;top:758.5px;font-size:14px;line-height:20px;color:#53575c;letter-spacing:0.18px">止：2018-09-21 14:26:14</div>
<div class="t" style="left:1312.0px;width:300px;text-align:center;top:748.0px;font-size:14px;line-height:20px;color:#53575c;">24小时</div>
<div class="t" style="left:1400.8px;width:300px;text-align:center;top:748.0px;font-size:14px;line-height:20px;color:#bbb;">已结束</div>
<div class="t" style="left:1489.5px;width:300px;text-align:center;top:748.5px;font-size:14px;line-height:20px;color:#5a5e63;">100</div>
<div class="t" style="left:1707.6px;top:748.0px;font-size:14px;line-height:20px;color:#36a5bc;">详情</div>
<div class="t" style="left:1755.4px;top:748.0px;font-size:14px;line-height:20px;color:#36a5bc;">编辑</div>
<div class="t" style="left:1803.6px;top:748.0px;font-size:14px;line-height:20px;color:#36a5bc;">关闭砍价</div>
<div class="b" style="left:180px;top:849px;width:1700px;height:1px;background:#e1e8eb"></div>
<div class="b" style="left:205px;top:811px;width:16px;height:16px;border:1px solid #dde4e6;border-radius:1px;box-sizing:border-box;background:#fff"></div>
<div class="t" style="left:246px;top:809.0px;font-size:14px;line-height:20px;color:#53575c;">轻松过四级考核</div>
<div class="t" style="left:404.1px;width:300px;text-align:center;top:809.5px;font-size:14px;line-height:20px;color:#5a5e63;">￥100.00</div>
<div class="t" style="left:488.0px;width:300px;text-align:center;top:809.5px;font-size:14px;line-height:20px;color:#5a5e63;">￥30.00</div>
<div class="t" style="left:590.4px;width:300px;text-align:center;top:809.0px;font-size:14px;line-height:20px;color:#53575c;">不限制</div>
<div class="t" style="left:714.0px;width:300px;text-align:center;top:809.5px;font-size:14px;line-height:20px;color:#5a5e63;">20%-40%</div>
<div class="t" style="left:859.6px;width:300px;text-align:center;top:809.5px;font-size:14px;line-height:20px;color:#5a5e63;">10%-30%</div>
<div class="t" style="left:1011.75px;width:300px;text-align:center;top:809.0px;font-size:14px;line-height:20px;color:#53575c;">不允许</div>
<div class="t" style="left:1174.0px;width:300px;text-align:center;top:798.5px;font-size:14px;line-height:20px;color:#53575c;letter-spacing:0.18px">起：2018-09-07 14:26:14</div>
<div class="t" style="left:1174.0px;width:300px;text-align:center;top:819.5px;font-size:14px;line-height:20px;color:#53575c;letter-spacing:0.18px">止：2018-09-21 14:26:14</div>
<div class="t" style="left:1312.0px;width:300px;text-align:center;top:809.0px;font-size:14px;line-height:20px;color:#53575c;">24小时</div>
<div class="t" style="left:1400.8px;width:300px;text-align:center;top:809.0px;font-size:14px;line-height:20px;color:#36a5bc;">进行中</div>
<div class="t" style="left:1489.5px;width:300px;text-align:center;top:809.5px;font-size:14px;line-height:20px;color:#5a5e63;">100</div>
<div class="t" style="left:1707.6px;top:809.0px;font-size:14px;line-height:20px;color:#36a5bc;">详情</div>
<div class="t" style="left:1755.4px;top:809.0px;font-size:14px;line-height:20px;color:#36a5bc;">编辑</div>
<div class="t" style="left:1803.6px;top:809.0px;font-size:14px;line-height:20px;color:#36a5bc;">关闭砍价</div>
<div class="b" style="left:180px;top:910px;width:1700px;height:1px;background:#e1e8eb"></div>
<div class="b" style="left:205px;top:872px;width:16px;height:16px;border:1px solid #dde4e6;border-radius:1px;box-sizing:border-box;background:#fff"></div>
<div class="t" style="left:246px;top:870.0px;font-size:14px;line-height:20px;color:#53575c;">轻松过四级考核</div>
<div class="t" style="left:404.1px;width:300px;text-align:center;top:870.5px;font-size:14px;line-height:20px;color:#5a5e63;">￥100.00</div>
<div class="t" style="left:488.0px;width:300px;text-align:center;top:870.5px;font-size:14px;line-height:20px;color:#5a5e63;">￥30.00</div>
<div class="t" style="left:590.4px;width:300px;text-align:center;top:870.0px;font-size:14px;line-height:20px;color:#53575c;">不限制</div>
<div class="t" style="left:714.0px;width:300px;text-align:center;top:870.5px;font-size:14px;line-height:20px;color:#5a5e63;">20%-40%</div>
<div class="t" style="left:859.6px;width:300px;text-align:center;top:870.5px;font-size:14px;line-height:20px;color:#5a5e63;">10%-30%</div>
<div class="t" style="left:1011.75px;width:300px;text-align:center;top:870.0px;font-size:14px;line-height:20px;color:#53575c;">不允许</div>
<div class="t" style="left:1174.0px;width:300px;text-align:center;top:859.5px;font-size:14px;line-height:20px;color:#53575c;letter-spacing:0.18px">起：2018-09-07 14:26:14</div>
<div class="t" style="left:1174.0px;width:300px;text-align:center;top:880.5px;font-size:14px;line-height:20px;color:#53575c;letter-spacing:0.18px">止：2018-09-21 14:26:14</div>
<div class="t" style="left:1312.0px;width:300px;text-align:center;top:870.0px;font-size:14px;line-height:20px;color:#53575c;">24小时</div>
<div class="t" style="left:1400.8px;width:300px;text-align:center;top:870.0px;font-size:14px;line-height:20px;color:#bbb;">已关闭</div>
<div class="t" style="left:1489.5px;width:300px;text-align:center;top:870.5px;font-size:14px;line-height:20px;color:#5a5e63;">100</div>
<div class="t" style="left:1707.6px;top:870.0px;font-size:14px;line-height:20px;color:#36a5bc;">详情</div>
<div class="t" style="left:1755.4px;top:870.0px;font-size:14px;line-height:20px;color:#36a5bc;">编辑</div>
<div class="t" style="left:1803.6px;top:870.0px;font-size:14px;line-height:20px;color:#36a5bc;">关闭砍价</div>
<div class="b" style="left:180px;top:971px;width:1700px;height:1px;background:#e1e8eb"></div>
<div class="b" style="left:205px;top:933px;width:16px;height:16px;border:1px solid #dde4e6;border-radius:1px;box-sizing:border-box;background:#fff"></div>
<div class="t" style="left:246px;top:931.0px;font-size:14px;line-height:20px;color:#53575c;">轻松过四级考核</div>
<div class="t" style="left:404.1px;width:300px;text-align:center;top:931.5px;font-size:14px;line-height:20px;color:#5a5e63;">￥100.00</div>
<div class="t" style="left:488.0px;width:300px;text-align:center;top:931.5px;font-size:14px;line-height:20px;color:#5a5e63;">￥30.00</div>
<div class="t" style="left:590.4px;width:300px;text-align:center;top:931.0px;font-size:14px;line-height:20px;color:#53575c;">不限制</div>
<div class="t" style="left:714.0px;width:300px;text-align:center;top:931.5px;font-size:14px;line-height:20px;color:#5a5e63;">20%-40%</div>
<div class="t" style="left:859.6px;width:300px;text-align:center;top:931.5px;font-size:14px;line-height:20px;color:#5a5e63;">10%-30%</div>
<div class="t" style="left:1011.75px;width:300px;text-align:center;top:931.0px;font-size:14px;line-height:20px;color:#53575c;">不允许</div>
<div class="t" style="left:1174.0px;width:300px;text-align:center;top:920.5px;font-size:14px;line-height:20px;color:#53575c;letter-spacing:0.18px">起：2018-09-07 14:26:14</div>
<div class="t" style="left:1174.0px;width:300px;text-align:center;top:941.5px;font-size:14px;line-height:20px;color:#53575c;letter-spacing:0.18px">止：2018-09-21 14:26:14</div>
<div class="t" style="left:1312.0px;width:300px;text-align:center;top:931.0px;font-size:14px;line-height:20px;color:#53575c;">24小时</div>
<div class="t" style="left:1400.8px;width:300px;text-align:center;top:931.0px;font-size:14px;line-height:20px;color:#e8413d;">未开始</div>
<div class="t" style="left:1489.5px;width:300px;text-align:center;top:931.5px;font-size:14px;line-height:20px;color:#5a5e63;">100</div>
<div class="t" style="left:1707.6px;top:931.0px;font-size:14px;line-height:20px;color:#36a5bc;">详情</div>
<div class="t" style="left:1755.4px;top:931.0px;font-size:14px;line-height:20px;color:#36a5bc;">编辑</div>
<div class="t" style="left:1803.6px;top:931.0px;font-size:14px;line-height:20px;color:#36a5bc;">关闭砍价</div>
<div class="b" style="left:802px;top:291px;width:270.5px;height:24px;background:#666;border-radius:2px"></div>
<div class="b" style="left:923.5px;top:287px;width:0;height:0;border-left:4px solid transparent;border-right:4px solid transparent;border-bottom:4px solid #666"></div>
<div class="t" style="left:802.25px;width:270px;text-align:center;top:295.0px;font-size:12px;line-height:16px;color:#fff;-webkit-text-stroke:0.2px #fff">课程差价（课程原价原价-砍价价格）的百分比</div>
<div class="b" style="left:140px;top:1016px;width:1780px;height:64px;background:#fff;border-top:1px solid #dfe5ea;box-sizing:border-box"></div>
<div class="b" style="left:200px;top:1040px;width:16px;height:16px;border:1px solid #dde4e6;border-radius:1px;box-sizing:border-box;background:#fff"></div>
<div class="t" style="left:226px;top:1038.0px;font-size:14px;line-height:20px;color:#53575c;">全选</div>
<div class="b" style="left:278px;top:1031px;width:100px;height:34px;border:1px solid #dce3e6;border-radius:2px;box-sizing:border-box;background:#fff"></div>
<div class="t" style="left:278.0px;width:100px;text-align:center;top:1038.0px;font-size:14px;line-height:20px;color:#4f5358;">关闭砍价</div>
<div class="t" style="left:1268px;top:1038.0px;font-size:14px;line-height:20px;color:#53575c;">共54条记录</div>
<div class="b" style="left:1351px;top:1031px;width:54px;height:34px;border:1px solid #dce3e6;border-radius:2px;box-sizing:border-box;background:#fff"></div>
<div class="t" style="left:1351.0px;width:54px;text-align:center;top:1038.0px;font-size:14px;line-height:20px;color:#53575c;">首页</div>
<div class="b" style="left:1415px;top:1031px;width:70px;height:34px;border:1px solid #dce3e6;border-radius:2px;box-sizing:border-box;background:#fff"></div>
<div class="t" style="left:1415.0px;width:70px;text-align:center;top:1038.0px;font-size:14px;line-height:20px;color:#53575c;">上一页</div>
<div class="b" style="left:1495px;top:1031px;width:34px;height:34px;border:1px solid #36a5bc;border-radius:2px;box-sizing:border-box;background:#fff"></div>
<div class="t" style="left:1495.0px;width:34px;text-align:center;top:1038.0px;font-size:14px;line-height:20px;color:#36a5bc;">1</div>
<div class="b" style="left:1539px;top:1031px;width:34px;height:34px;border:1px solid #dce3e6;border-radius:2px;box-sizing:border-box;background:#fff"></div>
<div class="t" style="left:1539.0px;width:34px;text-align:center;top:1038.0px;font-size:14px;line-height:20px;color:#53575c;">2</div>
<div class="b" style="left:1583px;top:1031px;width:34px;height:34px;border:1px solid #dce3e6;border-radius:2px;box-sizing:border-box;background:#fff"></div>
<div class="t" style="left:1583.0px;width:34px;text-align:center;top:1038.0px;font-size:14px;line-height:20px;color:#53575c;">3</div>
<div class="b" style="left:1627px;top:1031px;width:34px;height:34px;border:1px solid #dce3e6;border-radius:2px;box-sizing:border-box;background:#fff"></div>
<div class="t" style="left:1627.0px;width:34px;text-align:center;top:1038.0px;font-size:14px;line-height:20px;color:#53575c;">4</div>
<div class="b" style="left:1671px;top:1031px;width:34px;height:34px;border:1px solid #dce3e6;border-radius:2px;box-sizing:border-box;background:#fff"></div>
<div class="t" style="left:1671.0px;width:34px;text-align:center;top:1038.0px;font-size:14px;line-height:20px;color:#53575c;">5</div>
<div class="b" style="left:1715px;top:1031px;width:34px;height:34px;border:1px solid #dce3e6;border-radius:2px;box-sizing:border-box;background:#fff"></div>
<div class="t" style="left:1715.0px;width:34px;text-align:center;top:1038.0px;font-size:14px;line-height:20px;color:#53575c;">6</div>
<div class="b" style="left:1759px;top:1031px;width:70px;height:34px;border:1px solid #dce3e6;border-radius:2px;box-sizing:border-box;background:#fff"></div>
<div class="t" style="left:1759.0px;width:70px;text-align:center;top:1038.0px;font-size:14px;line-height:20px;color:#53575c;">下一页</div>
<div class="b" style="left:1839px;top:1031px;width:54px;height:34px;border:1px solid #dce3e6;border-radius:2px;box-sizing:border-box;background:#fff"></div>
<div class="t" style="left:1839.0px;width:54px;text-align:center;top:1038.0px;font-size:14px;line-height:20px;color:#53575c;">末页</div>
</div></body></html>
